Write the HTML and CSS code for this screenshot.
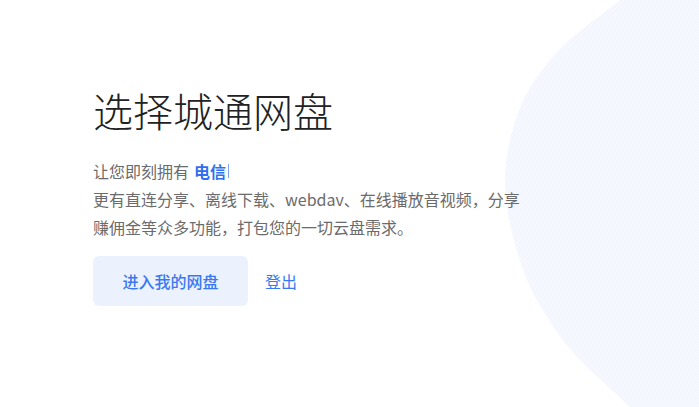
FILE: index.html
```html
<!DOCTYPE html>
<html lang="zh-CN">
<head>
<meta charset="utf-8">
<title>选择城通网盘</title>
<link rel="stylesheet" href="styles.css">
</head>
<body>
<div class="page">
  <svg class="blob" viewBox="0 0 699 407" width="699" height="407" aria-hidden="true">
    <defs>
      <pattern id="dots" width="4" height="4" patternUnits="userSpaceOnUse">
        <rect width="4" height="4" fill="#f5f8fe"/>
        <circle cx="1" cy="1" r="0.5" fill="#e8effc"/>
        <circle cx="3" cy="3" r="0.5" fill="#e8effc"/>
      </pattern>
    </defs>
    <path fill="url(#dots)" d="M620 0 C600.7 15.7 577.5 31.5 562 47 C546.5 62.5 535.7 77.5 527 93 C518.3 108.5 513.7 124.7 510 140 C506.3 155.3 504.7 169.5 505 185 C505.3 200.5 508.3 217.2 512 233 C515.7 248.8 521.2 266 527 280 C532.8 294 538.7 304.2 547 317 C555.3 329.8 563.2 342 577 357 C590.8 372 612.3 390.3 630 407 L700 407 L700 0 Z"/>
  </svg>
  <main class="content">
    <h1 class="title">选择城通网盘</h1>
    <p class="lead">让您即刻拥有 <strong class="brand">电信</strong><span class="cursor"></span></p>
    <p class="desc">更有直连分享、离线下载、webdav、在线播放音视频，分享赚佣金等众多功能，打包您的一切云盘需求。</p>
    <div class="actions">
      <a class="btn-primary" href="#">进入我的网盘</a>
      <a class="btn-link" href="#">登出</a>
    </div>
  </main>
</div>
</body>
</html>
```

FILE: styles.css
```css
* { box-sizing: border-box; }
html, body {
  margin: 0;
  padding: 0;
  background: #ffffff;
}
body {
  font-family: "Noto Sans CJK SC", "Noto Sans", sans-serif;
}
.page {
  position: relative;
  width: 699px;
  height: 407px;
  overflow: hidden;
}
.blob {
  position: absolute;
  left: 0;
  top: 0;
  z-index: 0;
}
.content {
  position: relative;
  z-index: 1;
  padding: 80px 0 0 93px;
  width: 525px;
}
.title {
  margin: 0;
  font-size: 40px;
  line-height: 60px;
  font-weight: 300;
  color: #222222;
}
.lead {
  margin: 17px 0 0;
  font-size: 16px;
  line-height: 28px;
  color: #6b6b6b;
  display: flex;
  align-items: center;
}
.brand {
  margin-left: 5px;
  font-weight: 700;
  color: #2f6ff0;
}
.cursor {
  display: inline-block;
  width: 1px;
  height: 14px;
  margin-left: 2px;
  background: #7ea6f5;
}
.desc {
  margin: 0;
  width: 432px;
  font-size: 16px;
  line-height: 28px;
  color: #6b6b6b;
}
.actions {
  margin-top: 15px;
  display: flex;
  align-items: center;
  gap: 17px;
}
.btn-primary {
  display: flex;
  align-items: center;
  justify-content: center;
  width: 155px;
  height: 50px;
  border-radius: 6px;
  background: #ebf2fe;
  color: #3a78f2;
  font-size: 16px;
  font-weight: 500;
  text-decoration: none;
}
.btn-link {
  color: #3a78f2;
  font-size: 16px;
  text-decoration: none;
}
```
